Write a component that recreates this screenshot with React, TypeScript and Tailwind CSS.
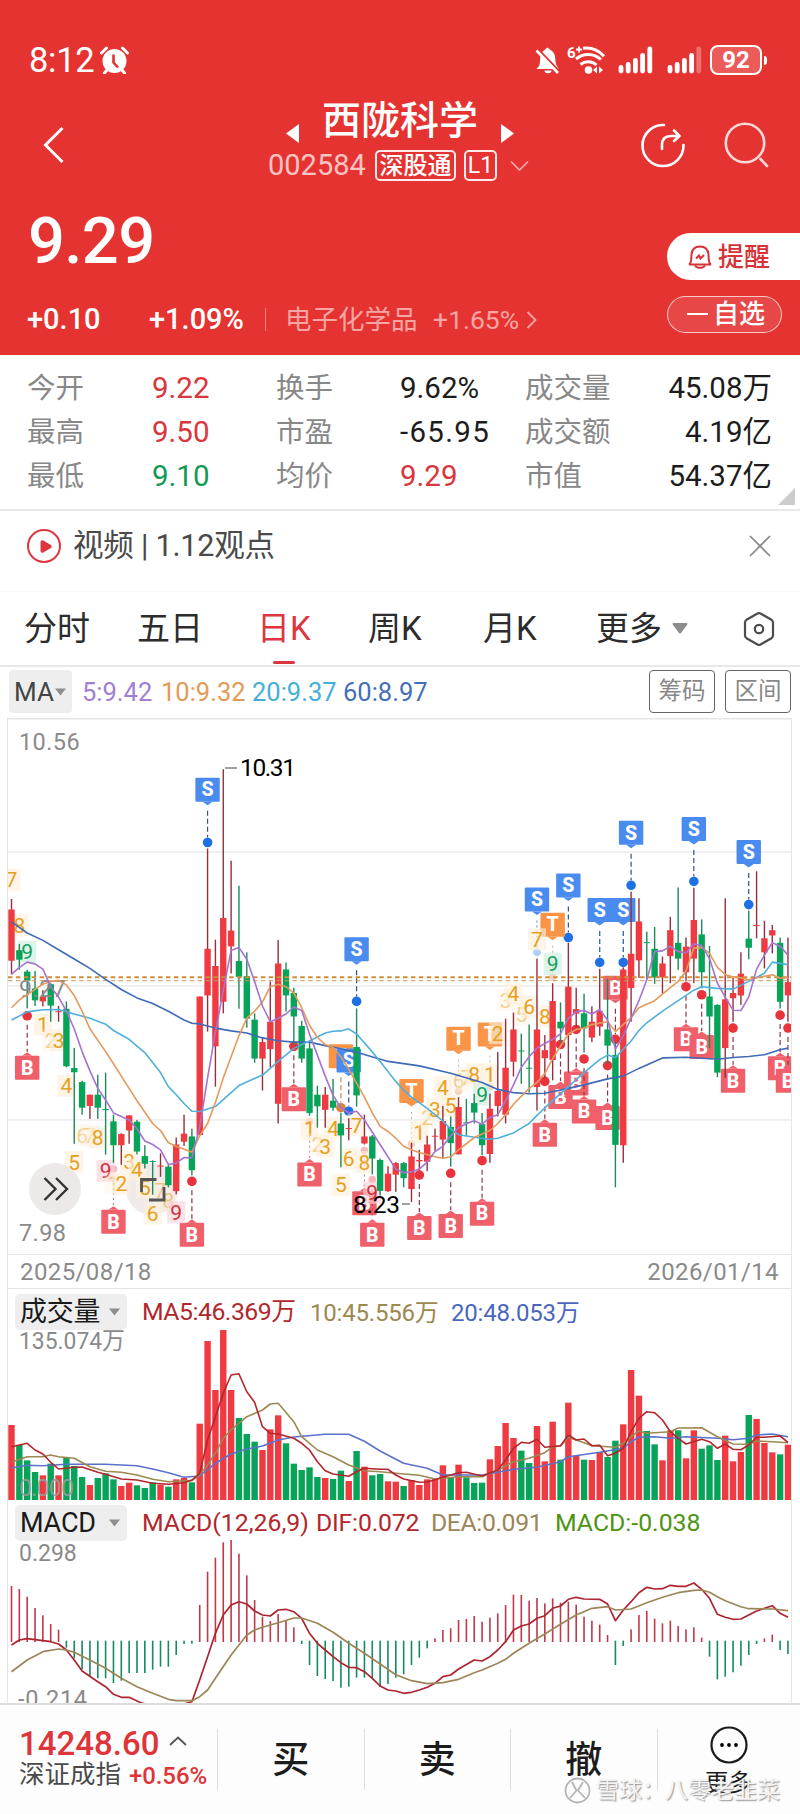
import type { ReactNode } from 'react';
import clsx from 'clsx';
import { XIcon, PlayIcon } from 'lucide-react';

type Dir = 'r' | 'g';
type Candle = [Dir, number, number, number, number];
type Point = [number, number];
type MarkKind = 'S' | 'B' | 'T';

// chart units -> pixels
const px = (i: number) => 3.5 + i * 7.843;
const py = (v: number) => (v - 24) / 2.851;
const vy = (v: number) => v / 3 - 89;
const my = (v: number) => v / 3 - 40;

const toPath = (points: Point[], y: (v: number) => number) =>
    points.map(([i, v]) => `${px(i).toFixed(1)},${y(v).toFixed(1)}`).join(' ');

const RED = '#ef3a41';
const GREEN = '#06a358';

// direction, high, body top, body bottom, low
const CANDLES: Candle[] = [
    ['r', 540, 570, 716, 755], ['g', 668, 686, 713, 742], ['g', 742, 747, 773, 852], ['g', 745, 795, 829, 845],
    ['r', 800, 818, 832, 846], ['g', 780, 783, 844, 890], ['r', 845, 860, 862, 890], ['g', 832, 853, 1017, 1020],
    ['g', 965, 1022, 1034, 1238], ['g', 1058, 1062, 1135, 1155], ['r', 1098, 1098, 1130, 1167], ['g', 1041, 1098, 1135, 1167],
    ['g', 1035, 1139, 1141, 1269], ['g', 1155, 1174, 1242, 1292], ['r', 1208, 1210, 1242, 1298], ['r', 1157, 1157, 1200, 1238],
    ['g', 1170, 1175, 1260, 1268], ['g', 1242, 1273, 1295, 1308], ['g', 1285, 1287, 1289, 1383], ['r', 1265, 1300, 1302, 1332],
    ['g', 1298, 1303, 1356, 1362], ['r', 1220, 1240, 1373, 1382], ['r', 1155, 1209, 1232, 1244], ['g', 1195, 1217, 1313, 1328],
    ['r', 818, 818, 1213, 1213], ['r', 396, 682, 815, 918], ['r', 656, 731, 960, 1075], ['r', 170, 594, 833, 866],
    ['r', 431, 630, 675, 752], ['g', 502, 717, 762, 853], ['g', 692, 760, 881, 907], ['g', 866, 884, 995, 1007],
    ['r', 935, 948, 995, 1086], ['r', 775, 890, 968, 1020], ['r', 657, 724, 1124, 1180], ['g', 721, 741, 815, 861],
    ['g', 793, 808, 875, 957], ['g', 887, 902, 995, 1007], ['g', 945, 966, 1150, 1158], ['g', 1072, 1098, 1131, 1192],
    ['r', 1076, 1098, 1141, 1192], ['g', 1053, 1115, 1135, 1144], ['g', 1150, 1180, 1214, 1305], ['r', 1165, 1193, 1195, 1228],
    ['g', 852, 962, 1100, 1132], ['r', 1155, 1217, 1237, 1240], ['g', 1213, 1217, 1280, 1325], ['g', 1280, 1284, 1372, 1385],
    ['r', 1302, 1323, 1373, 1375], ['r', 1290, 1293, 1326, 1375], ['g', 1290, 1293, 1336, 1362], ['r', 1235, 1274, 1367, 1404],
    ['r', 1255, 1284, 1288, 1315], ['r', 1215, 1240, 1289, 1316], ['r', 1195, 1215, 1217, 1258], ['r', 1130, 1173, 1226, 1280],
    ['g', 1160, 1190, 1236, 1303], ['r', 1105, 1133, 1268, 1268], ['g', 1110, 1177, 1179, 1215], ['g', 1095, 1122, 1149, 1180],
    ['g', 1150, 1182, 1242, 1270], ['r', 1095, 1138, 1267, 1292], ['r', 976, 1087, 1130, 1160], ['r', 881, 1021, 1155, 1180],
    ['r', 864, 912, 1004, 1046], ['g', 924, 972, 974, 1067], ['g', 898, 1021, 1023, 1092], ['r', 710, 912, 1076, 1143],
    ['r', 928, 971, 994, 1050], ['r', 780, 831, 999, 1057], ['g', 835, 890, 909, 950], ['r', 665, 790, 928, 1035],
    ['r', 793, 854, 867, 905], ['g', 810, 866, 909, 978], ['r', 846, 890, 935, 948], ['r', 739, 860, 904, 930],
    ['g', 768, 912, 958, 1010], ['g', 945, 985, 1241, 1362], ['r', 735, 741, 1242, 1292], ['r', 519, 696, 794, 890],
    ['r', 538, 604, 715, 765], ['g', 633, 663, 665, 770], ['g', 620, 682, 764, 782], ['r', 704, 724, 763, 810],
    ['r', 591, 629, 703, 780], ['g', 507, 665, 710, 742], ['r', 650, 676, 749, 775], ['r', 508, 600, 710, 780],
    ['g', 598, 641, 749, 795], ['g', 674, 818, 875, 965], ['g', 840, 842, 1035, 1048], ['r', 538, 826, 965, 1050],
    ['r', 765, 808, 823, 890], ['r', 692, 753, 815, 842], ['g', 573, 653, 679, 712], ['r', 461, 614, 616, 652],
    ['r', 602, 652, 692, 738], ['r', 614, 629, 644, 695], ['g', 650, 665, 833, 852], ['r', 650, 777, 815, 890],
];

const MA60: Point[] = [[0, 605], [2, 637], [4, 658], [6, 685], [8, 711], [10, 738], [12, 769], [14, 798], [16, 822], [18, 838], [20, 860], [22, 885], [23, 894], [24, 896], [26, 908], [28, 916], [30, 922], [32, 936], [34, 944], [36, 948], [38, 948], [40, 958], [42, 967], [44, 977], [48, 1003], [52, 1016], [56, 1037], [60, 1063], [62, 1083], [64, 1092], [66, 1095], [68, 1094], [71, 1080], [73, 1070], [76, 1053], [78, 1045], [80, 1023], [83, 993], [86, 991], [90, 997], [92, 992], [94, 989], [96, 984], [98, 970], [99, 965]];
const MA20: Point[] = [[0, 885], [2, 862], [4, 856], [6, 855], [8, 868], [10, 880], [12, 897], [13, 915], [15, 940], [17, 978], [19, 1035], [20, 1075], [21, 1098], [22, 1123], [23, 1145], [24, 1146], [26, 1132], [28, 1092], [29, 1072], [31, 1052], [32, 1042], [33, 1023], [34, 1003], [36, 966], [38, 945], [40, 922], [41, 917], [42, 916], [43, 910], [44, 925], [46, 976], [47, 1003], [49, 1060], [50, 1085], [51, 1105], [53, 1137], [55, 1173], [56, 1196], [57, 1212], [59, 1219], [61, 1225], [62, 1222], [64, 1207], [66, 1180], [67, 1157], [69, 1115], [71, 1075], [73, 1035], [75, 998], [76, 985], [77, 992], [79, 945], [80, 915], [81, 893], [83, 860], [85, 830], [87, 800], [88, 790], [90, 795], [92, 797], [94, 775], [96, 752], [97, 720], [99, 727]];
const MA10: Point[] = [[0, 850], [1, 828], [2, 813], [4, 783], [5, 775], [6, 772], [7, 785], [8, 815], [9, 860], [10, 910], [12, 975], [13, 1010], [15, 1080], [16, 1115], [18, 1180], [19, 1200], [20, 1235], [21, 1245], [23, 1262], [24, 1215], [25, 1180], [26, 1120], [27, 1050], [28, 990], [29, 930], [30, 880], [31, 860], [32, 833], [33, 790], [34, 783], [35, 790], [36, 808], [37, 850], [38, 900], [39, 935], [40, 955], [41, 963], [42, 990], [43, 1025], [44, 1065], [45, 1105], [46, 1150], [47, 1188], [48, 1203], [49, 1222], [50, 1245], [51, 1255], [52, 1263], [54, 1275], [55, 1279], [56, 1275], [57, 1255], [59, 1220], [61, 1200], [62, 1180], [63, 1155], [64, 1125], [66, 1080], [67, 1063], [68, 1037], [69, 995], [70, 960], [71, 925], [72, 912], [73, 908], [74, 898], [76, 890], [77, 918], [79, 878], [80, 850], [82, 830], [84, 793], [85, 775], [86, 745], [87, 680], [88, 678], [89, 695], [90, 735], [91, 755], [92, 762], [93, 765], [94, 770], [96, 760], [97, 756], [98, 766], [99, 764]];
const MA5: Point[] = [[0, 755], [1, 735], [2, 720], [3, 725], [4, 740], [5, 790], [6, 820], [7, 860], [8, 910], [9, 975], [10, 1030], [11, 1080], [12, 1113], [13, 1150], [14, 1160], [15, 1170], [16, 1195], [17, 1230], [18, 1240], [19, 1255], [20, 1297], [21, 1293], [22, 1277], [23, 1278], [24, 1190], [25, 1050], [26, 920], [27, 800], [28, 687], [29, 678], [30, 712], [31, 775], [32, 845], [33, 890], [34, 880], [35, 868], [36, 848], [37, 858], [38, 925], [39, 985], [40, 1045], [41, 1100], [42, 1135], [43, 1150], [44, 1145], [45, 1170], [46, 1205], [47, 1240], [48, 1275], [49, 1310], [50, 1320], [51, 1318], [52, 1310], [53, 1290], [54, 1260], [55, 1245], [56, 1215], [57, 1193], [58, 1180], [59, 1172], [60, 1182], [61, 1163], [62, 1155], [63, 1115], [64, 1070], [65, 1020], [66, 990], [67, 965], [68, 952], [69, 940], [70, 925], [71, 880], [72, 862], [73, 858], [74, 868], [75, 855], [76, 885], [77, 968], [78, 930], [79, 880], [80, 830], [81, 770], [82, 690], [83, 688], [84, 675], [85, 690], [86, 693], [87, 668], [88, 673], [89, 710], [90, 780], [91, 820], [92, 857], [93, 858], [94, 820], [95, 740], [96, 700], [97, 665], [98, 675], [99, 700]];

// kind, index, dot position, tag top
const MARKS: [MarkKind, number, number, number][] = [
    ['S', 25, 379, 194], ['T', 42, 1135, 954], ['S', 43, 1145, 966], ['S', 44, 832, 649], ['S', 67, 692, 507],
    ['S', 71, 650, 467], ['S', 75, 721, 537], ['S', 78, 721, 537], ['S', 79, 501, 317], ['S', 87, 490, 306], ['S', 94, 556, 372],
    ['T', 51, 1238, 1053], ['T', 57, 1088, 904], ['T', 61, 1075, 892], ['T', 69, 763, 579],
    ['B', 2, 873, 987], ['B', 13, 1310, 1426], ['B', 23, 1345, 1463], ['B', 36, 960, 1077], ['B', 38, 1175, 1291],
    ['B', 45, 1257, 1373], ['B', 46, 1340, 1463], ['B', 52, 1327, 1444], ['B', 56, 1322, 1438], ['B', 60, 1286, 1403],
    ['B', 68, 1060, 1178], ['B', 70, 955, 1070], ['B', 72, 912, 1032], ['B', 73, 996, 1112], ['B', 76, 1015, 1130],
    ['B', 77, 940, 759], ['B', 86, 790, 906], ['B', 88, 813, 928], ['B', 92, 908, 1024], ['B', 98, 871, 988], ['B', 99, 908, 1024],
];

// marks whose dot sits behind a count badge
const DIMMED = [13, 38, 45, 46, 51, 57, 61, 67, 69];

// index, position, digit, tone, faded
const COUNTS: [number, number, number, 'o' | 'g' | 'r', boolean][] = [
    [0, 485, 7, 'o', false], [1, 615, 8, 'o', false], [2, 690, 9, 'g', false],
    [4, 897, 1, 'o', false], [5, 943, 2, 'o', true], [6, 943, 3, 'o', false], [7, 1073, 4, 'o', false], [8, 1290, 5, 'o', false],
    [9, 1213, 6, 'o', true], [10, 1215, 7, 'o', true], [11, 1220, 8, 'o', false], [12, 1315, 9, 'r', false],
    [13, 1350, 1, 'o', true], [14, 1352, 2, 'o', false], [15, 1288, 3, 'o', false], [16, 1312, 4, 'o', false], [17, 1362, 5, 'o', false],
    [18, 1437, 6, 'o', false], [19, 1370, 7, 'o', true], [20, 1400, 8, 'o', true], [21, 1433, 9, 'r', false],
    [38, 1195, 1, 'o', false], [39, 1240, 2, 'o', true], [40, 1245, 3, 'o', false], [41, 1193, 4, 'o', false], [42, 1355, 5, 'o', false],
    [43, 1280, 6, 'o', false], [44, 1185, 7, 'o', false], [45, 1290, 8, 'o', false], [46, 1378, 9, 'r', false],
    [52, 1205, 1, 'o', false], [53, 1162, 2, 'o', true], [54, 1140, 3, 'o', false], [55, 1077, 4, 'o', false], [56, 1130, 5, 'o', false],
    [57, 1058, 6, 'o', true], [58, 1050, 7, 'o', true], [59, 1040, 8, 'o', false], [60, 1097, 9, 'g', false],
    [61, 1040, 1, 'o', false], [62, 923, 2, 'o', false], [63, 828, 3, 'o', true], [64, 810, 4, 'o', false], [65, 868, 5, 'o', true],
    [66, 847, 6, 'o', false], [67, 655, 7, 'o', false], [68, 875, 8, 'o', false], [69, 725, 9, 'g', false],
];

const VOLUME = [
    555, 615, 661, 696, 706, 671, 706, 654, 678, 711, 735, 714, 700, 718, 738, 728, 736, 744, 727, 734,
    740, 718, 714, 727, 551, 303, 450, 270, 450, 534, 582, 605, 630, 568, 526, 610, 671, 690, 682, 711,
    714, 717, 692, 723, 633, 680, 706, 702, 724, 725, 738, 720, 735, 718, 718, 676, 714, 674, 712, 729,
    728, 658, 618, 549, 594, 632, 669, 558, 664, 545, 659, 488, 648, 659, 660, 636, 651, 602, 553, 390,
    467, 573, 613, 661, 571, 571, 655, 571, 626, 616, 660, 587, 664, 636, 525, 537, 609, 637, 643, 614,
];
const VOL5: Point[] = [[0, 620], [2, 610], [3, 630], [4, 642], [5, 667], [6, 687], [8, 682], [9, 681], [11, 697], [12, 703], [14, 717], [16, 720], [18, 730], [20, 733], [22, 728], [23, 720], [24, 700], [25, 600], [26, 530], [27, 460], [28, 405], [29, 401], [30, 455], [31, 487], [32, 560], [33, 580], [34, 582], [36, 595], [37, 610], [38, 630], [39, 665], [40, 692], [41, 702], [43, 709], [44, 695], [45, 685], [47, 688], [48, 688], [49, 705], [50, 717], [52, 727], [53, 726], [55, 712], [57, 698], [58, 697], [60, 708], [62, 690], [63, 660], [64, 625], [65, 607], [66, 610], [67, 598], [68, 622], [70, 617], [71, 585], [72, 600], [73, 597], [74, 617], [75, 616], [76, 647], [77, 640], [78, 625], [79, 575], [80, 535], [81, 515], [82, 518], [83, 540], [84, 575], [85, 595], [86, 612], [88, 598], [89, 605], [90, 625], [91, 612], [92, 628], [93, 629], [94, 615], [95, 592], [96, 592], [98, 588], [99, 607]];
const VOL10: Point[] = [[0, 667], [2, 650], [4, 650], [5, 645], [6, 650], [8, 655], [10, 680], [12, 694], [14, 697], [16, 705], [18, 718], [20, 725], [22, 722], [23, 722], [24, 705], [25, 675], [26, 640], [27, 595], [28, 570], [30, 530], [32, 510], [33, 492], [34, 490], [36, 545], [37, 590], [39, 630], [41, 650], [43, 675], [45, 692], [47, 695], [49, 700], [52, 706], [54, 717], [57, 710], [60, 710], [62, 690], [64, 665], [66, 655], [68, 638], [69, 620], [70, 618], [71, 592], [73, 608], [74, 617], [77, 622], [78, 610], [79, 590], [80, 573], [81, 580], [84, 575], [85, 564], [88, 563], [90, 590], [92, 612], [94, 613], [95, 603], [97, 605], [99, 608]];
const VOL20: Point[] = [[0, 684], [2, 676], [4, 677], [7, 673], [12, 673], [16, 677], [18, 687], [20, 698], [22, 712], [24, 708], [26, 670], [28, 642], [30, 627], [32, 618], [34, 600], [36, 591], [40, 583], [43, 583], [45, 604], [47, 633], [50, 670], [53, 685], [55, 705], [58, 705], [60, 705], [62, 697], [64, 688], [67, 682], [70, 665], [71, 650], [75, 637], [78, 625], [79, 605], [80, 592], [82, 590], [84, 595], [86, 590], [90, 595], [92, 599], [94, 595], [95, 585], [97, 582], [99, 590]];

const ZERO = 424;
const MACD = [
    258, 267, 290, 324, 346, 372, 389, 443, 475, 508, 529, 535, 535, 549, 542, 519, 519, 519, 509, 500,
    500, 465, 432, 431, 315, 215, 173, 127, 120, 161, 226, 300, 350, 363, 342, 360, 382, 432, 495, 528,
    537, 543, 563, 560, 533, 533, 535, 560, 552, 533, 523, 495, 473, 445, 415, 390, 385, 360, 357, 348,
    365, 353, 340, 315, 284, 285, 302, 294, 310, 295, 308, 305, 314, 350, 362, 374, 405, 495, 438, 388,
    345, 333, 356, 370, 362, 378, 388, 382, 413, 470, 538, 530, 517, 497, 465, 432, 415, 404, 450, 462,
];
const DIF: Point[] = [[0, 435], [1, 420], [2, 416], [5, 425], [6, 432], [7, 450], [8, 480], [9, 513], [11, 545], [12, 560], [13, 583], [14, 592], [15, 592], [16.5, 608], [19, 625], [22, 612], [23, 605], [24, 540], [25, 470], [26, 400], [27, 345], [28, 315], [29, 305], [30, 312], [31, 333], [32, 345], [33, 348], [34, 330], [35, 328], [36, 335], [37, 355], [38, 400], [39, 430], [40, 450], [41, 470], [42, 488], [43, 502], [44, 503], [45, 515], [46, 535], [47, 558], [48, 570], [49, 573], [50, 580], [51, 577], [52, 570], [53, 562], [54, 550], [55, 530], [56, 525], [57, 507], [59, 480], [60, 483], [61, 470], [62, 450], [63, 425], [64, 390], [65, 378], [66, 372], [67, 355], [68, 347], [69, 325], [70, 318], [71, 298], [72, 292], [73, 297], [75, 298], [76, 312], [77, 362], [78, 330], [79, 305], [80, 278], [81, 262], [82, 267], [83, 266], [84, 256], [85, 259], [86, 259], [87, 249], [88, 268], [89, 295], [90, 343], [91, 352], [92, 358], [93, 357], [94, 345], [95, 333], [97, 317], [98, 340], [99, 352]];
const DEA: Point[] = [[0, 515], [2, 480], [4, 455], [6, 447], [7, 450], [8, 457], [10, 480], [12, 505], [14, 535], [16, 560], [18, 580], [20, 598], [21, 602], [23, 602], [24, 590], [25, 570], [26, 535], [28, 465], [30, 405], [31, 390], [32, 382], [34, 368], [36, 354], [37, 354], [39, 370], [41, 397], [43, 430], [45, 460], [47, 492], [49, 524], [51, 542], [53, 551], [55, 548], [57, 538], [59, 518], [60, 510], [62, 490], [63, 478], [64, 460], [66, 430], [68, 402], [70, 373], [72, 345], [74, 325], [76, 320], [77, 330], [79, 327], [81, 308], [83, 292], [85, 278], [87, 271], [88, 270], [89, 277], [90, 290], [91, 302], [93, 320], [94, 326], [97, 327], [99, 332]];

const MARK_STYLE: Record<MarkKind, { tag: string; dot: string; dash: string }> = {
    S: { tag: '#4a8bf0', dot: '#1f6fe5', dash: '#30508f' },
    T: { tag: '#fa9447', dot: '#d98243', dash: '#b58a6a' },
    B: { tag: '#f0606b', dot: '#e8323c', dash: '#8c3548' },
};

const COUNT_STYLE = {
    o: { bg: '#fdf0dc', fg: '#e6a020' },
    g: { bg: '#cdeedd', fg: '#12a05c' },
    r: { bg: '#fbd3d8', fg: '#cf2f3c' },
};

const Mark = ({ kind, index, dot, top }: { kind: MarkKind; index: number; dot: number; top: number }) => {
    const { tag, dot: dotColor, dash } = MARK_STYLE[kind];
    const x = px(index);
    const y = py(top);
    const above = top < dot;
    const tip = above ? y + 24 : y;
    const dim = DIMMED.includes(index);
    return (
        <g>
            <line x1={x} x2={x} y1={above ? y + 33 : py(dot) + 9} y2={above ? py(dot) - 5 : y - 4} stroke={dash} strokeWidth="1.2" strokeDasharray={dim ? '2 3' : '5 3'} opacity={dim ? 0.6 : 1} />
            <circle cx={x} cy={py(dot)} r={dim ? 3.8 : 4.8} fill={dotColor} opacity={dim ? 0.35 : 1} />
            <g>
                <rect x={x - 12.2} y={y} width="24.4" height="24" rx="1" fill={tag} />
                <path d={above ? `M${x - 5} ${tip}h10l-5 3.5z` : `M${x - 5} ${tip}h10l-5 -3.5z`} fill={tag} />
            </g>
            <text x={x} y={y + 18.8} fontSize="19.5" fontWeight="800" textAnchor="middle" fill="#fff">{kind}</text>
        </g>
    );
};

const KLineChart = () => (
    <svg width="783" height="536" className="block">
        <rect y="0" width="783" height="1.5" fill="#e6e6e6" />
        {[406, 788, 1170].map(v => <rect key={v} y={py(v) - 0.7} width="783" height="1.3" fill="#e9e9e9" />)}
        <text x="11" y="31.5" fontSize="23.5" fill="#8a8a8a" letterSpacing="0.4">10.56</text>
        <text x="11" y="522.5" fontSize="23.5" fill="#8a8a8a" letterSpacing="0.4">7.98</text>

        {MARKS.map(([kind, index, dot, top]) => <Mark key={`${kind}${index}`} kind={kind} index={index} dot={dot} top={top} />)}

        <circle cx="144" cy="471" r="26" fill="#e9e4e4" opacity="0.75" />
        {COUNTS.map(([index, v, digit, tone, faded]) => (
            <g key={index} opacity={faded ? 0.5 : 1}>
                <rect x={px(index) - 9} y={py(v) - 11} width="18" height="22" fill={COUNT_STYLE[tone].bg} opacity="0.65" />
                <text x={px(index)} y={py(v) + 7.5} fontSize="21" textAnchor="middle" fill={COUNT_STYLE[tone].fg}>{digit}</text>
            </g>
        ))}

        {CANDLES.map(([dir, high, top, bottom, low], i) => (
            <g key={i} fill={dir === 'r' ? RED : GREEN}>
                <rect x={px(i) - 0.7} y={py(high)} width="1.4" height={py(low) - py(high)} fill={dir === 'r' ? '#93303f' : '#1d8a5a'} />
                <rect x={px(i) - 3.2} y={py(top)} width="6.4" height={Math.max(1, py(bottom) - py(top))} />
            </g>
        ))}
        <text x="11" y="279" fontSize="23" fill="#8a8a8a" letterSpacing="0.6">9.27</text>
        <line x1="0" x2="783" y1={py(763)} y2={py(763)} stroke="#cf8d3a" strokeWidth="2" strokeDasharray="4.5 3.4" />
        <line x1="0" x2="783" y1={py(773)} y2={py(773)} stroke="#c79560" strokeWidth="1" strokeDasharray="4.5 3.4" />

        <g fill="none" strokeWidth="1.6" strokeLinejoin="round">
            <polyline points={toPath(MA60, py)} stroke="#3f6bb5" />
            <polyline points={toPath(MA20, py)} stroke="#4fb0da" />
            <polyline points={toPath(MA10, py)} stroke="#e39a5c" />
            <polyline points={toPath(MA5, py)} stroke="#a673cd" />
        </g>

        <path d="M133.500 474V461.500h15M141 482h15V469" fill="none" stroke="#555" strokeWidth="2.8" />
        <circle cx="47" cy="471" r="26" fill="#e9e4e4" opacity="0.8" />
        <path d="M36.500 460l11 11-11 11M48 460l11 11-11 11" fill="none" stroke="#333" strokeWidth="2.4" />

        <path d="M217 50h12M394 486h8" stroke="#444" strokeWidth="1.2" />
        <text x="232" y="57.500" fontSize="24.500" fill="#000" textLength="56">10.31</text>
        <text x="345" y="494.500" fontSize="24.500" fill="#000" textLength="47">8.23</text>
    </svg>
);

const VolumeChart = () => (
    <svg width="783" height="171" className="block">
        {VOLUME.map((v, i) => (
            <rect key={i} x={px(i) - 3.2} y={vy(v)} width="6.4" height={171 - vy(v)} fill={CANDLES[i][0] === 'r' ? RED : GREEN} />
        ))}
        <g fill="none" strokeWidth="1.6" strokeLinejoin="round">
            <polyline points={toPath(VOL20, vy)} stroke="#5a72cc" />
            <polyline points={toPath(VOL10, vy)} stroke="#9c8850" />
            <polyline points={toPath(VOL5, vy)} stroke="#b3262c" />
        </g>
        <text x="11" y="20" fontSize="23.500" fill="#8a8a8a" textLength="106" lengthAdjust="spacingAndGlyphs">135.074万</text>
        <text x="11" y="167" fontSize="23" fill="#9a9a9a" fillOpacity="0.9" textLength="55">0.000</text>
    </svg>
);

const MacdChart = () => (
    <svg width="783" height="163" className="block">
        {MACD.map((v, i) => {
            const up = v < ZERO;
            return <rect key={i} x={px(i) - 0.8} y={up ? my(v) : my(ZERO - 2)} width="1.6" height={up ? my(ZERO + 2) - my(v) : my(v) - my(ZERO - 2)} fill={up ? '#c0394a' : '#168a63'} />;
        })}
        <g fill="none" strokeWidth="1.7" strokeLinejoin="round">
            <polyline points={toPath(DIF, my)} stroke="#ad2430" />
            <polyline points={toPath(DEA, my)} stroke="#9c8558" />
        </g>
        <text x="11" y="21" fontSize="23" fill="#8a8a8a">0.298</text>
        <text x="10" y="167" fontSize="23.500" fill="#8a8a8a" textLength="69">-0.214</text>
    </svg>
);

const StatusBar = () => (
    <div className="flex h-[30px] items-center">
        <span className="ml-[29px] w-[71px] text-[34.500px] leading-[30px] tracking-[-0.3px]">8:12</span>
        <svg width="29" height="28" viewBox="0 0 29 28">
            <circle cx="14.500" cy="15" r="12" fill="#fff" />
            <path d="M1.500 7l5-5M27.500 7l-5-5M7 24l-2.500 3M22 24l2.500 3" stroke="#fff" strokeWidth="3" strokeLinecap="round" />
            <path d="M13.500 8.500v8l4.500 5" fill="none" stroke="#e53331" strokeWidth="2.600" />
        </svg>
        <svg className="ml-auto" width="25" height="28" viewBox="0 0 25 28">
            <path d="M4 20c1.600-3 .6-8 2-11.500C7.500 4.500 10 4 12.500 1.500 15 4 18 4.500 19.500 8.500c1.300 4 .4 8.500 2.500 11.500l1.500 3H1.500z" fill="#fff" />
            <path d="M9.500 24.500h7a3.500 2.800 0 0 1-7 0z" fill="#fff" />
            <path d="M3.500 3.500L25 26" stroke="#e53331" strokeWidth="2" />
            <path d="M1.500 4.500L23 27" stroke="#fff" strokeWidth="2.600" />
        </svg>
        <svg className="ml-[7px]" width="40" height="30" viewBox="0 0 40 30">
            <text x="0" y="13" fontSize="15" fontWeight="700" fill="#fff">6</text>
            <path d="M9 4.500h6M12 1.500v6" stroke="#fff" strokeWidth="1.800" />
            <g fill="none" stroke="#fff" strokeWidth="3">
                <path d="M16 3.200a24 24 0 0 1 21 8" />
                <path d="M9 14a18.500 18.500 0 0 1 25 .5" />
                <path d="M13.500 19.500a12 12 0 0 1 16 .5" />
            </g>
            <circle cx="21.500" cy="25" r="3.800" fill="#fff" />
            <path d="M30 21.500v7l-4-3.500zM32 21.500v7l4-3.500z" fill="#fff" />
        </svg>
        <svg className="ml-[11px]" width="36" height="28" viewBox="0 0 36 28" stroke="#fff" strokeWidth="4.800" strokeLinecap="round">
            <path d="M3 25v-3.500M10.200 25v-6.500M17.400 25V14.500M24.600 25V9.500M31.800 25V3" />
        </svg>
        <svg className="ml-[13px]" width="36" height="28" viewBox="0 0 36 28" stroke="#fff" strokeWidth="4.800" strokeLinecap="round">
            <path d="M3 25v-3.500M10.200 25v-6.500M17.400 25V14.500M24.600 25V9.500" />
            <path d="M31.800 25V3" opacity="0.3" />
        </svg>
        <div className="ml-[7px] flex h-[30px] w-[52px] items-center justify-center rounded-[8px] border-2 border-white bg-white/20 text-[24px] font-bold leading-none">92</div>
        <div className="mr-[33px] ml-[2px] h-[9px] w-[3px] rounded-r bg-white" />
    </div>
);

const Header = () => (
    <header className="h-[355px] bg-[#e53331] pt-[45px] text-white">
        <StatusBar />
        <div className="mt-[22px] flex h-[90px] pl-[43px]">
            <svg className="mt-[29px]" width="22" height="38" viewBox="0 0 22 38"><path d="M19.500 2L2.500 19l17 17" fill="none" stroke="#fff" strokeWidth="3" /></svg>
            <div className="ml-[203px] w-[262px]">
                <div className="flex h-[46px] items-center pl-[18px]">
                    <svg className="mt-[26px]" width="14" height="19"><path d="M13 0v19L0 9.500z" fill="#fff" /></svg>
                    <span className="mx-[22px] mt-[2px] text-[39px] font-medium leading-none">西陇科学</span>
                    <svg className="mt-[26px]" width="14" height="19"><path d="M1 0v19l13-9.500z" fill="#fff" /></svg>
                </div>
                <div className="mt-[7px] flex h-[31px] items-center">
                    <span className="w-[107px] text-[29px] leading-none text-[#fbc4c3]">002584</span>
                    <span className="flex h-[31px] w-[81px] items-center justify-center rounded-[5px] border-2 border-white/90 text-[24px] font-medium leading-none">深股通</span>
                    <span className="ml-[8px] flex h-[31px] w-[33px] items-center justify-center rounded-[5px] border-2 border-white/90 text-[23px] leading-none">L1</span>
                    <svg className="ml-[13px] shrink-0" width="19" height="12"><path d="M1 1.500l8.500 8.500L18 1.500" fill="none" stroke="#f9b0af" strokeWidth="1.600" /></svg>
                </div>
            </div>
            <svg className="mt-[25px] ml-[110px]" width="46" height="46" viewBox="0 0 46 46" fill="none" stroke="#fff" strokeWidth="2.600" strokeLinecap="round" strokeLinejoin="round">
                <path d="M24 3a20.500 20.500 0 1 0 19.500 20" />
                <path d="M22 27v-4c0-6 3-9 9-9h7M34 8.500l5.500 5.500-5.500 5" />
            </svg>
            <svg className="mt-[25px] ml-[38px]" width="46" height="46" viewBox="0 0 46 46" fill="none" stroke="#fcd9d9" strokeWidth="2.600" strokeLinecap="round">
                <circle cx="21" cy="21" r="19.200" />
                <path d="M36.500 37l6.500 7" />
            </svg>
        </div>
        <div className="mt-[17px] flex items-start">
            <span className="ml-[28px] pt-[2px] text-[65px] font-medium leading-[70px] tracking-[-0.6px]">9.29</span>
            <div className="mt-[29px] ml-auto flex h-[47px] w-[133px] items-center rounded-l-full bg-white pl-[20px] text-[#d63238]">
                <svg width="26" height="28" viewBox="0 0 26 28" fill="none" stroke="currentColor" strokeWidth="2">
                    <path d="M2 21.500c3-1.500 2-6 2.500-10C5 6 8.500 3.500 13 3.500S21 6 21.500 11.500c.5 4-.5 8.500 2.500 10z" />
                    <path d="M8 22.500a5.500 4 0 0 0 10 0M9 15.500l3-3 1.500 3 3.500-3.500" />
                </svg>
                <span className="ml-[5px] text-[26px] font-medium leading-none">提醒</span>
            </div>
        </div>
        <div className="mt-[13px] flex h-[42px] items-center text-[29px]">
            <span className="mt-[12px] ml-[27px] w-[122px] font-medium">+0.10</span>
            <span className="mt-[12px] w-[116px] font-medium">+1.09%</span>
            <span className="mt-[11px] h-[23px] w-px bg-white/40" />
            <span className="mt-[11px] ml-[19px] w-[148px] text-[26.500px] text-[#f8a5a4]">电子化学品</span>
            <span className="mt-[12px] text-[26.500px] text-[#f8a5a4]">+1.65%</span>
            <svg className="mt-[11px] ml-[7px]" width="11" height="18"><path d="M1.500 1l8 8-8 8" fill="none" stroke="#f8a5a4" strokeWidth="1.800" /></svg>
            <div className="mr-[18px] ml-auto flex h-[37px] w-[115px] items-center rounded-full border border-white/70 bg-white/10 pl-[19px]">
                <span className="h-[2px] w-[21px] bg-white" />
                <span className="ml-[5px] text-[26px] font-medium leading-none">自选</span>
            </div>
        </div>
    </header>
);

const STATS: [string, string, string][][] = [
    [['今开', '9.22', 'text-[#d9363e]'], ['换手', '9.62%', 'text-[#1c1c1c]'], ['成交量', '45.08万', 'text-[#1c1c1c]']],
    [['最高', '9.50', 'text-[#d9363e]'], ['市盈', '-65.95', 'text-[#1c1c1c] tracking-[1.3px]'], ['成交额', '4.19亿', 'text-[#1c1c1c]']],
    [['最低', '9.10', 'text-[#129a55]'], ['均价', '9.29', 'text-[#d9363e]'], ['市值', '54.37亿', 'text-[#1c1c1c]']],
];

const Stats = () => (
    <section className="relative h-[156px] border-b-2 border-[#e8e8e8] pt-[12px]">
        {STATS.map((row, r) => (
            <div key={r} className="grid h-[44px] grid-cols-[125px_124px_124px_125px_86px_161px] items-center pl-[27px] text-[28.500px] leading-none">
                {row.map(([label, value, color], c) => [
                    <span key={label} className="text-[#888] whitespace-nowrap">{label}</span>,
                    <span key={value} className={clsx('text-[29.500px]', color, c === 2 && 'text-right whitespace-nowrap')}>{value}</span>,
                ])}
            </div>
        ))}
        <svg className="absolute right-[5px] bottom-[4px]" width="17" height="17"><path d="M17 0v17H0z" fill="#ccc" /></svg>
    </section>
);

const VideoBar = () => (
    <section className="flex h-[81px] items-center border-b border-[#fcf8f8] pr-[29px] pb-[10px] pl-[27px]">
        <span className="flex size-[34px] items-center justify-center rounded-full border-[2.500px] border-[#dd3640]">
            <PlayIcon className="ml-[2px] size-[15px] fill-[#dd3640] text-[#dd3640]" />
        </span>
        <span className="ml-[12px] pt-[1px] text-[30.500px] leading-none tracking-[-0.2px] text-[#4a4a4a]">视频 | 1.12观点</span>
        <XIcon className="ml-auto size-[38px] -mr-[8px] text-[#888]" strokeWidth={1.1} />
    </section>
);

const TABS: [string, string][] = [['分时', 'w-[113px]'], ['五日', 'w-[120px]'], ['日K', 'w-[111px]'], ['周K', 'w-[115px]'], ['月K', 'w-[113px]'], ['更多', 'w-[76px]']];

const Tabs = () => (
    <nav className="flex h-[75px] items-center border-b-2 border-[#e8e8e8] pl-[24px] text-[33px] leading-none text-[#2c2c2c]">
        {TABS.map(([label, width]) => (
            <span key={label} className={clsx('relative shrink-0', width, label === '日K' && 'text-[#dd3640]')}>
                {label}
                {label === '日K' && <i className="absolute top-[49px] left-[16px] h-[3px] w-[22px] rounded bg-[#dd3640]" />}
            </span>
        ))}
        <svg width="16" height="11"><path d="M1 0h14q1 1 0 2L9 10q-1 1-2 0L1 2q-1-1 0-2z" fill="#8d8d8d" /></svg>
        <svg className="ml-[54px]" width="34" height="36" viewBox="0 0 34 36" fill="none" stroke="#4c4c4c" strokeWidth="2.200" strokeLinejoin="round">
            <path d="M15.500 2.500q1.500-.8 3 0l11 6.300q1.500 1 1.500 2.600v13.200q0 1.600-1.500 2.600l-11 6.300q-1.500.8-3 0l-11-6.300Q3 26.200 3 24.600V11.400q0-1.600 1.500-2.600z" />
            <circle cx="17" cy="18" r="4.200" />
        </svg>
    </nav>
);

const Caret = ({ className }: { className?: string }) => (
    <svg className={className} width="11" height="8"><path d="M0 .5h11L5.500 7.500z" fill="#8d8d8d" /></svg>
);

const MaBar = () => (
    <div className="flex h-[51px] items-start pt-[3px] text-[25.500px] leading-none">
        <div className="ml-[9px] flex h-[43px] w-[63px] items-center rounded-[4px] bg-[#eee] pl-[5px] text-[26px] text-[#444]">
            MA
            <Caret className="ml-[1px]" />
        </div>
        <div className="ml-[10px] flex h-[45px] items-center">
            <span className="w-[79px] text-[#a07fd4]">5:9.42</span>
            <span className="w-[91px] text-[#e49a56]">10:9.32</span>
            <span className="w-[91px] text-[#46afd8]">20:9.37</span>
            <span className="text-[#446fb8]">60:8.97</span>
        </div>
        {['筹码', '区间'].map((label, i) => (
            <button key={label} className={clsx('flex h-[43px] w-[66px] items-center justify-center rounded-[4px] border border-[#666] text-[23.500px] text-[#888]', i === 0 ? 'ml-auto' : 'mr-[9px] ml-[10px]')}>{label}</button>
        ))}
    </div>
);

const PanelHeader = ({ title, children }: { title: string; children: ReactNode }) => (
    <div className="flex h-[40px] items-start pt-[5px] text-[24.800px] leading-none whitespace-nowrap">
        <div className="ml-[7px] flex h-[36px] w-[112px] shrink-0 items-center justify-between rounded-[5px] bg-[#eee] pr-[7px] pl-[5px] text-[27px] tracking-[-0.2px] text-[#1a1a1a]">
            {title}
            <Caret />
        </div>
        <div className="ml-[15px] flex h-[37px] items-center">{children}</div>
    </div>
);

const BottomBar = () => (
    <footer className="relative flex h-[111px] items-start border-t-2 border-[#ddd] bg-[#fdfdfd] pt-[24px]">
        <div className="h-[64px] w-[217px] pl-[19px]">
            <div className="flex h-[29px] items-center text-[33px] font-medium leading-none text-[#dd3539]">
                14248.60
                <svg className="mb-[6px] ml-[10px]" width="18" height="10"><path d="M1 9l8-7.500L17 9" fill="none" stroke="#555" strokeWidth="1.800" /></svg>
            </div>
            <div className="mt-[2px] flex h-[30px] items-center text-[25.500px] leading-none whitespace-nowrap text-[#4a4a4a]">
                深证成指<span className="ml-[8px] pt-[2px] text-[24px] font-medium tracking-[-0.1px] text-[#dd3539]">+0.56%</span>
            </div>
        </div>
        {['买', '卖', '撤'].map(label => (
            <div key={label} className="flex h-[61px] w-[146.500px] items-center justify-center border-l border-[#ddd] pt-[2px] text-[37px] font-medium leading-none text-[#1c1c1c]">{label}</div>
        ))}
        <div className="flex h-[61px] w-[143px] flex-col items-center border-l border-[#ddd]">
            <svg className="-mt-[3px] shrink-0" width="38" height="38"><circle cx="19" cy="19" r="17.500" fill="none" stroke="#1c1c1c" strokeWidth="2.200" /><circle cx="12" cy="19" r="1.900" /><circle cx="19" cy="19" r="1.900" /><circle cx="26" cy="19" r="1.900" /></svg>
            <span className="mt-[8px] text-[23.500px] leading-none text-[#1c1c1c]">更多</span>
        </div>
        <div className="absolute top-[72px] left-[564px] flex items-center text-[23px] leading-none text-[#f4f4f4] [text-shadow:1px_1px_1.500px_#888]">
            <svg width="27" height="27" viewBox="0 0 27 27" fill="none" stroke="#b5b5b5" strokeWidth="1.800"><circle cx="13.500" cy="13.500" r="12" /><path d="M8 5l4.500 8.500L6 21M19 5l-5 8.500 7 7.500" /></svg>
            <span className="ml-[5px] whitespace-nowrap">雪球：八零老韭菜</span>
        </div>
    </footer>
);

export default function App() {
    return (
        <div className="w-[800px] overflow-hidden bg-white font-[Roboto,'Noto_Sans_CJK_SC',sans-serif]">
            <Header />
            <Stats />
            <VideoBar />
            <Tabs />
            <MaBar />
            <main className="ml-[7px] w-[785px] border-x border-[#e6e6e6]">
                <KLineChart />
                <div className="flex h-[35px] items-center justify-between border-y border-[#e3e3e3] px-[12px] pt-[1px] text-[24px] leading-none tracking-[0.4px] text-[#8a8a8a]">
                    <span>2025/08/18</span>
                    <span>2026/01/14</span>
                </div>
                <PanelHeader title="成交量">
                    <span className="w-[168px] tracking-[-0.5px] text-[#b3262c]">MA5:46.369万</span>
                    <span className="w-[141px] text-[24px] tracking-[-0.2px] text-[#9c8850]">10:45.556万</span>
                    <span className="text-[24px] tracking-[-0.2px] text-[#4a66bd]">20:48.053万</span>
                </PanelHeader>
                <VolumeChart />
                <PanelHeader title="MACD">
                    <span className="w-[174px] text-[#b3262c]">MACD(12,26,9)</span>
                    <span className="w-[115px] tracking-[-0.2px] text-[#b3262c]">DIF:0.072</span>
                    <span className="w-[124px] tracking-[-0.4px] text-[#9c8558]">DEA:0.091</span>
                    <span className="text-[#4d9412]">MACD:-0.038</span>
                </PanelHeader>
                <MacdChart />
            </main>
            <BottomBar />
        </div>
    );
}
